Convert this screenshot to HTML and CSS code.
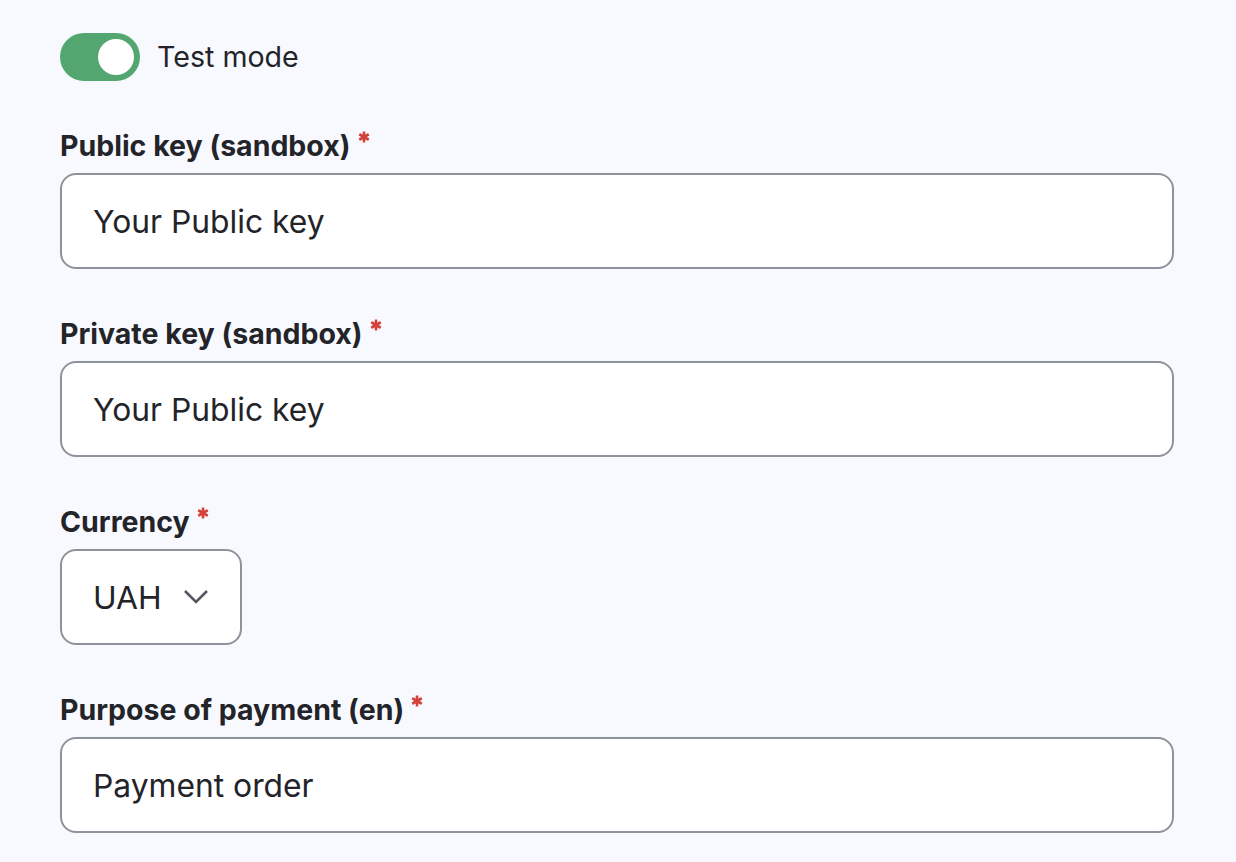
FILE: index.html
```html
<!DOCTYPE html>
<html lang="en">
<head>
<meta charset="utf-8">
<title>Settings</title>
<link rel="stylesheet" href="styles.css">
</head>
<body>
<form class="form">
  <div class="toggle-row">
    <span class="toggle"><span class="knob"></span></span>
    <span class="toggle-label">Test mode</span>
  </div>
  <div class="item">
    <label class="label">Public key (sandbox)<span class="req"><svg viewBox="0 0 12 12" width="12" height="12"><path d="M6 0.5v11M1.24 3.25l9.52 5.5M1.24 8.75l9.52-5.5" stroke="#d3423a" stroke-width="2.6"/></svg></span></label>
    <div class="input">Your Public key</div>
  </div>
  <div class="item">
    <label class="label">Private key (sandbox)<span class="req"><svg viewBox="0 0 12 12" width="12" height="12"><path d="M6 0.5v11M1.24 3.25l9.52 5.5M1.24 8.75l9.52-5.5" stroke="#d3423a" stroke-width="2.6"/></svg></span></label>
    <div class="input">Your Public key</div>
  </div>
  <div class="item">
    <label class="label">Currency<span class="req"><svg viewBox="0 0 12 12" width="12" height="12"><path d="M6 0.5v11M1.24 3.25l9.52 5.5M1.24 8.75l9.52-5.5" stroke="#d3423a" stroke-width="2.6"/></svg></span></label>
    <div class="select">UAH<svg class="chev" viewBox="0 0 26 16" width="26" height="16"><path d="M2 2l11 11 11-11" fill="none" stroke="#55565f" stroke-width="2.6"/></svg></div>
  </div>
  <div class="item">
    <label class="label">Purpose of payment (en)<span class="req"><svg viewBox="0 0 12 12" width="12" height="12"><path d="M6 0.5v11M1.24 3.25l9.52 5.5M1.24 8.75l9.52-5.5" stroke="#d3423a" stroke-width="2.6"/></svg></span></label>
    <div class="input">Payment order</div>
  </div>
</form>
</body>
</html>
```
FILE: styles.css
```css
html, body {
  margin: 0;
  padding: 0;
  background: #f8f9fe;
}
body {
  font-family: Inter, "Noto Sans", sans-serif;
  color: #232429;
}
.form {
  padding: 33px 62px 0 60px;
  display: flex;
  flex-direction: column;
  gap: 47px;
}
.toggle-row {
  display: flex;
  align-items: center;
  gap: 17px;
  height: 48px;
}
.toggle {
  width: 80px;
  height: 48px;
  border-radius: 24px;
  background: #53a66f;
  display: flex;
  align-items: center;
  justify-content: flex-end;
  padding-right: 6px;
  box-sizing: border-box;
}
.knob {
  width: 36px;
  height: 36px;
  border-radius: 50%;
  background: #fff;
}
.toggle-label {
  font-size: 28.6px;
  line-height: 36px;
}
.item {
  display: flex;
  flex-direction: column;
  align-items: flex-start;
}
.label {
  font-size: 28.5px;
  font-weight: 700;
  line-height: 36px;
  margin-bottom: 9px;
  display: flex;
  align-items: flex-start;
}
.req {
  margin-left: 7px;
  margin-top: 3px;
  display: inline-flex;
}
.input, .select {
  box-sizing: border-box;
  height: 96px;
  background: #fff;
  border: 2px solid #8e929c;
  border-radius: 16px;
  font-size: 31.8px;
  display: flex;
  align-items: center;
  padding-left: 31px;
}
.input {
  width: 1114px;
}
.select {
  width: 182px;
  gap: 21px;
}
```
